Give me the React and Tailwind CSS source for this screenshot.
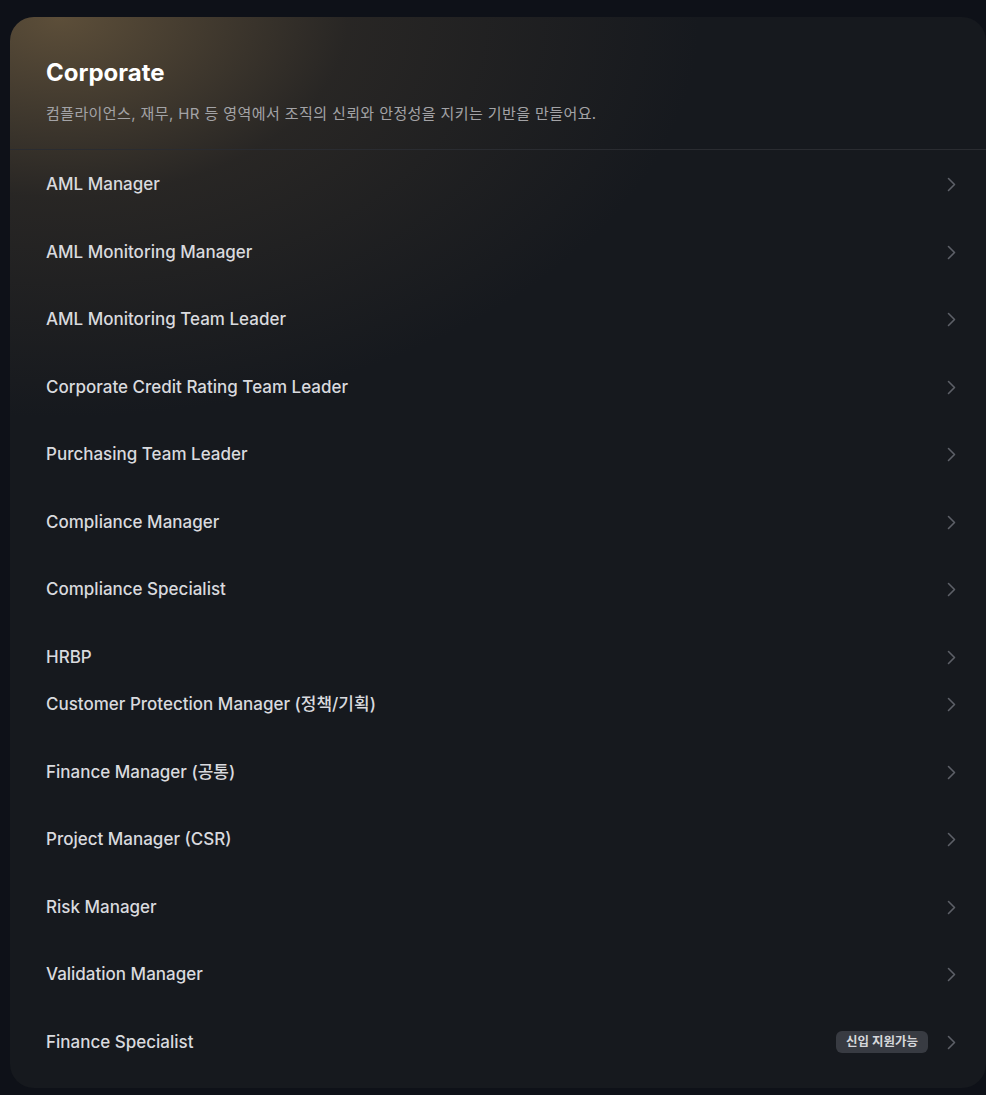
import React from 'react';

const roles = [
  { title: 'AML Manager' },
  { title: 'AML Monitoring Manager' },
  { title: 'AML Monitoring Team Leader' },
  { title: 'Corporate Credit Rating Team Leader' },
  { title: 'Purchasing Team Leader' },
  { title: 'Compliance Manager' },
  { title: 'Compliance Specialist' },
  { title: 'HRBP', tight: true },
  { title: 'Customer Protection Manager (정책/기획)' },
  { title: 'Finance Manager (공통)' },
  { title: 'Project Manager (CSR)' },
  { title: 'Risk Manager' },
  { title: 'Validation Manager' },
  { title: 'Finance Specialist', badge: '신입 지원가능' },
];

const Chevron = () => (
  <svg width="9" height="15" viewBox="0 0 9 15" fill="none" className="shrink-0">
    <path d="M1.5 1.5L7.5 7.5L1.5 13.5" stroke="#5d6068" strokeWidth="1.6" strokeLinecap="round" strokeLinejoin="round" />
  </svg>
);

const RoleRow = ({ title, badge, tight }) => (
  <div className={`flex items-center h-[67.5px] pl-[36px] pr-[30px] ${tight ? '-mb-[20px]' : ''}`}>
    <span className="flex-1 text-[17px] font-medium text-[#d9dade]">{title}</span>
    {badge && (
      <span className="mr-[19px] h-[22px] px-[10px] flex items-center rounded-[6px] bg-[#383b42] text-[12.5px] font-bold text-[#d6d7da]">
        {badge}
      </span>
    )}
    <Chevron />
  </div>
);

export default function App() {
  return (
    <div
      className="min-h-[1095px] bg-[#0e1118] pt-[17px] pl-[10px] overflow-hidden"
      style={{ fontFamily: 'Inter, "Noto Sans CJK KR", sans-serif' }}
    >
      <div className="relative w-[976px] h-[1071px] rounded-[24px] bg-[#16191e] overflow-hidden">
        <div className="absolute inset-0 pointer-events-none bg-[radial-gradient(ellipse_640px_400px_at_50px_0px,rgba(100,84,60,0.9),rgba(62,54,44,0.45)_45%,rgba(22,25,30,0)_100%)]" />
        <div className="relative">
          <div className="pl-[36px] pr-[36px] pt-[40px] pb-[24px] border-b border-[#2a2c31]">
            <h1 className="text-[24px] leading-[32px] font-bold text-white">Corporate</h1>
            <p className="mt-[14px] text-[15px] leading-[22px] text-[#a3a3a6] tracking-[0.4px]">
              컴플라이언스, 재무, HR 등 영역에서 조직의 신뢰와 안정성을 지키는 기반을 만들어요.
            </p>
          </div>
          <div className="pt-[1px]">
            {roles.map((r) => (
              <RoleRow key={r.title} {...r} />
            ))}
          </div>
        </div>
      </div>
    </div>
  );
}
